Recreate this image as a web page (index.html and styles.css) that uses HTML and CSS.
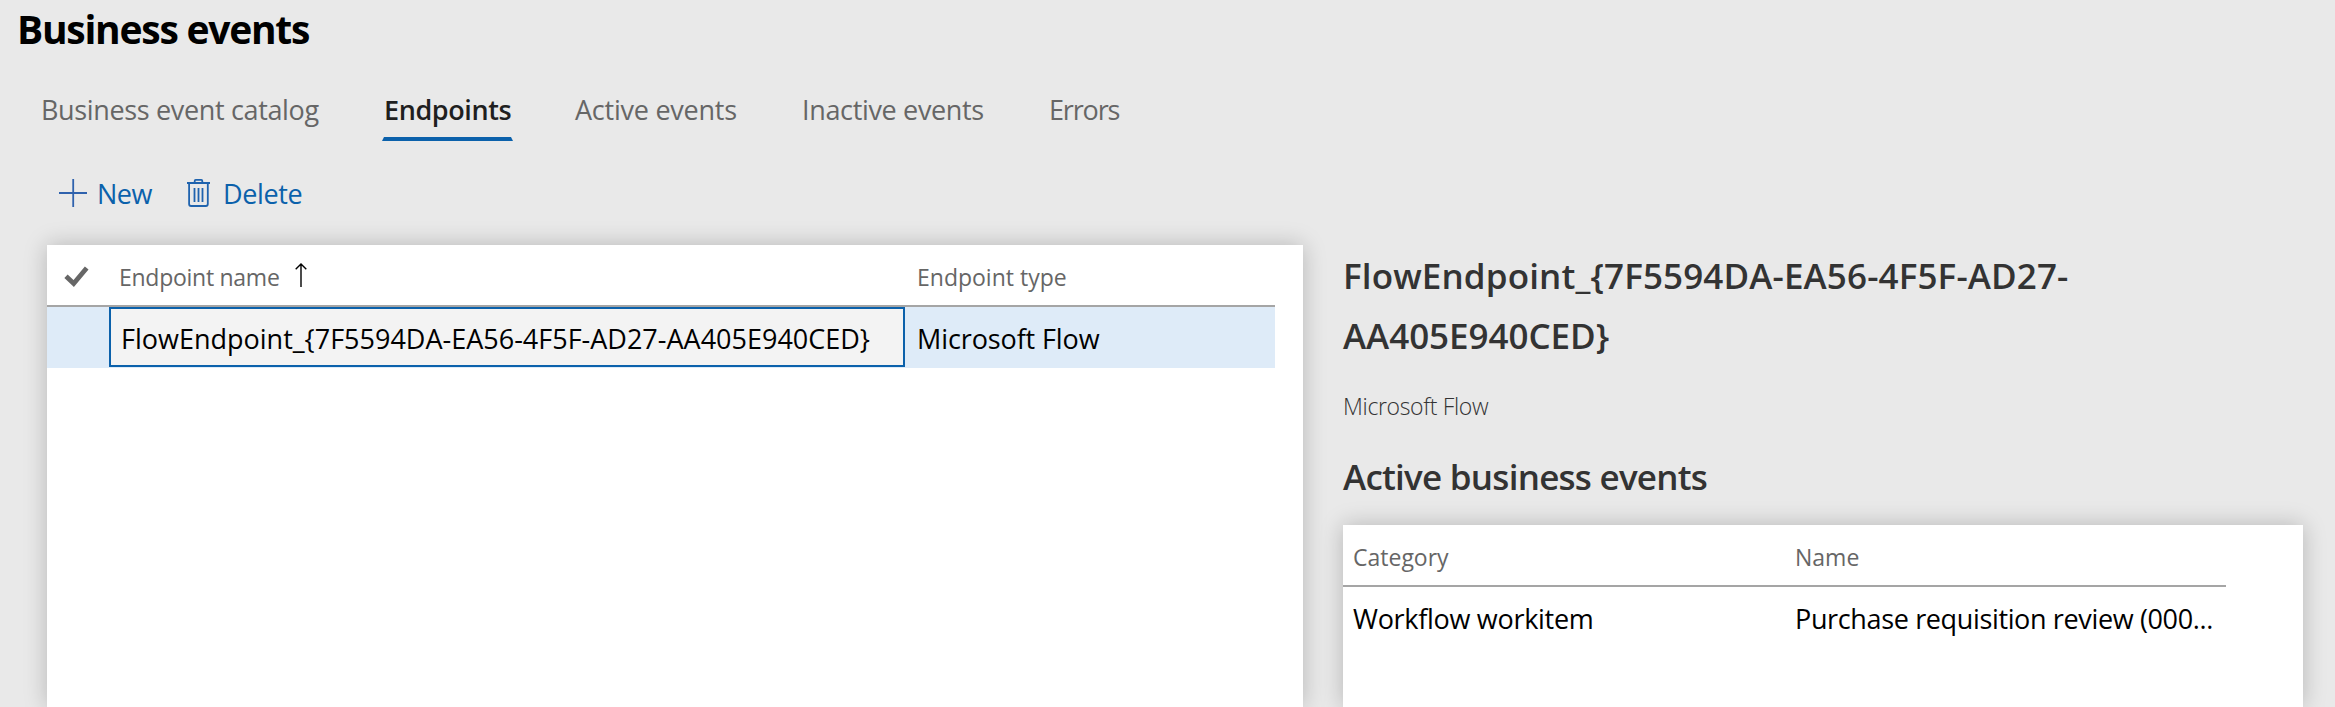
FILE: index.html
```
<!DOCTYPE html>
<html lang="en">
<head>
<meta charset="utf-8">
<title>Business events</title>
<link rel="stylesheet" href="styles.css">
</head>
<body>
<h1 class="page-title">Business events</h1>
<nav class="tabs">
  <a class="tab tab-catalog">Business event catalog</a>
  <a class="tab tab-endpoints active">Endpoints</a>
  <a class="tab tab-active-events">Active events</a>
  <a class="tab tab-inactive-events">Inactive events</a>
  <a class="tab tab-errors">Errors</a>
</nav>
<div class="toolbar">
  <button class="tool tool-new">
    <svg class="icon" width="28" height="28" viewBox="0 0 28 28"><path d="M0 14h28M14.2 0v28" fill="none" stroke="#2f62ad" stroke-width="1.8"/></svg>
    <span class="label-new">New</span>
  </button>
  <button class="tool tool-delete">
    <svg class="icon" width="23" height="28" viewBox="0 0 23 28"><g fill="none" stroke="#1f63ae" stroke-width="1.8"><path d="M0 4h23M7.7 4V1.9q0-1 1-1h5.6q1 0 1 1V4M2.1 4.5V25q0 2 2 2h14.7q2 0 2-2V4.5"/><path d="M7.5 9v14M11.5 9v14M15.5 9v14"/></g></svg>
    <span class="label-delete">Delete</span>
  </button>
</div>
<main class="content">
  <section class="panel endpoints">
    <div class="endpoint-grid grid-head">
      <div class="cell check-cell"><svg width="25" height="21" viewBox="0 0 25 21"><path d="M2 10.3L9.7 17.5L22.7 2" fill="none" stroke="#666" stroke-width="4.8"/></svg></div>
      <div class="cell name-head"><span class="label-name">Endpoint name</span><svg class="icon-sort" width="12" height="24" viewBox="0 0 12 24"><path d="M6 24V1.5M.7 6.2L6 1L11.3 6.2" fill="none" stroke="#000" stroke-width="1.4"/></svg></div>
      <div class="cell">Endpoint type</div>
    </div>
    <div class="endpoint-grid grid-row selected">
      <div class="cell"></div>
      <div class="cell focused">FlowEndpoint_{7F5594DA-EA56-4F5F-AD27-AA405E940CED}</div>
      <div class="cell type-value">Microsoft Flow</div>
    </div>
  </section>
  <section class="details">
    <h2 class="endpoint-title"><span class="title-start">FlowEndpoint_{7F5594DA-EA56-4F5F-AD27-</span><br><span class="title-end">AA405E940CED}</span></h2>
    <p class="endpoint-kind">Microsoft Flow</p>
    <h2 class="section-title">Active business events</h2>
    <div class="panel events">
      <div class="event-grid grid-head"><div class="cell">Category</div><div class="cell">Name</div></div>
      <div class="event-grid grid-row"><div class="cell category-value">Workflow workitem</div><div class="cell event-name">Purchase requisition review (000...</div></div>
    </div>
  </section>
</main>
</body>
</html>
```

FILE: styles.css
```
* { box-sizing: border-box; }
html, body { height: 100%; }
body {
  margin: 0;
  display: flex;
  flex-direction: column;
  overflow: hidden;
  background: #e9e9e9;
  color: #000;
  font: 27px "Open Sans", "Noto Sans", sans-serif;
  white-space: nowrap;
}
h1, h2, p { margin: 0; }

.page-title {
  flex: none;
  padding-left: 17px;
  font-size: 39px;
  font-weight: 700;
  line-height: 58px;
  letter-spacing: -1.25px;
}

.tabs {
  flex: none;
  display: flex;
  height: 59px;
  margin-top: 24px;
  padding-left: 41px;
}
.tab { line-height: 55px; color: #666; }
.tab-catalog { width: 341px; letter-spacing: -0.35px; }
.tab-endpoints { width: 131px; padding-left: 2px; letter-spacing: -0.41px; }
.tab-active-events { width: 227px; padding-left: 62px; letter-spacing: -0.24px; }
.tab-inactive-events { width: 309px; padding-left: 62px; letter-spacing: -0.34px; }
.tab-errors { letter-spacing: -1.15px; }
.tab.active { color: #1f1f1f; font-weight: 600; }
.tab.active::after {
  content: "";
  display: block;
  height: 4px;
  margin-left: -2px;
  background: #0b61ab;
  clip-path: polygon(2px 0, calc(100% - 2px) 0, 100% 100%, 0 100%);
}

.toolbar {
  flex: none;
  display: flex;
  gap: 34px;
  height: 41px;
  margin: 32px 0 31px;
  padding-left: 59px;
}
.tool {
  display: flex;
  align-items: center;
  padding: 0;
  border: 0;
  background: none;
  color: #0b61ab;
  font: inherit;
  line-height: 41px;
}
.icon { margin-bottom: 1px; }
.tool-new { width: 94px; gap: 10px; }
.tool-delete { gap: 13px; }
.label-new { letter-spacing: -0.5px; }
.label-delete { letter-spacing: -0.38px; }

.content {
  flex: 1;
  min-height: 0;
  display: grid;
  grid-template-columns: 1256px 960px;
  gap: 40px;
  padding-left: 47px;
}
.panel { background: #fff; box-shadow: 0 0 22px rgba(0, 0, 0, 0.22); }
.grid-head {
  height: 62px;
  padding-top: 2px;
  border-bottom: 2px solid #a5a5a5;
  color: #666;
  font-size: 23px;
  line-height: 60px;
}
.grid-row { height: 61px; line-height: 61px; }
.endpoint-grid {
  display: grid;
  grid-template-columns: 62px 796px 370px;
  grid-template-rows: 100%;
  width: 1228px;
}
.endpoint-grid .cell:last-child { padding-left: 12px; }
.check-cell { display: flex; align-items: center; padding-left: 17px; }
.name-head { display: flex; align-items: flex-start; gap: 15px; padding-left: 10px; }
.label-name { letter-spacing: -0.27px; }
.icon-sort { margin-top: 16px; }
.selected { background: #deebf8; }
.focused {
  height: 60px;
  padding-left: 10px;
  border: 2px solid #0b61ab;
  background: #f3f3f3;
  line-height: 59px;
}
.type-value { padding-top: 1px; letter-spacing: -0.11px; }

.details {
  display: flex;
  flex-direction: column;
  padding-top: 1px;
  color: #333;
}
.endpoint-title, .section-title { font-size: 35px; font-weight: 600; }
.endpoint-title { line-height: 60px; }
.title-start { letter-spacing: 0.13px; }
.title-end { letter-spacing: -0.05px; }
.endpoint-kind {
  margin-top: 24px;
  font-size: 23px;
  font-weight: 300;
  line-height: 32px;
  letter-spacing: -0.34px;
}
.section-title {
  margin: 30px 0 24px;
  line-height: 49px;
  letter-spacing: -0.75px;
}
.events { flex: 1; color: #000; }
.event-grid {
  display: grid;
  grid-template-columns: 442px 441px;
  width: 883px;
}
.event-grid .cell { padding-left: 10px; }
.event-grid.grid-row .cell { padding-top: 1px; }
.category-value { letter-spacing: -0.29px; }
.event-name { letter-spacing: -0.36px; }
```
